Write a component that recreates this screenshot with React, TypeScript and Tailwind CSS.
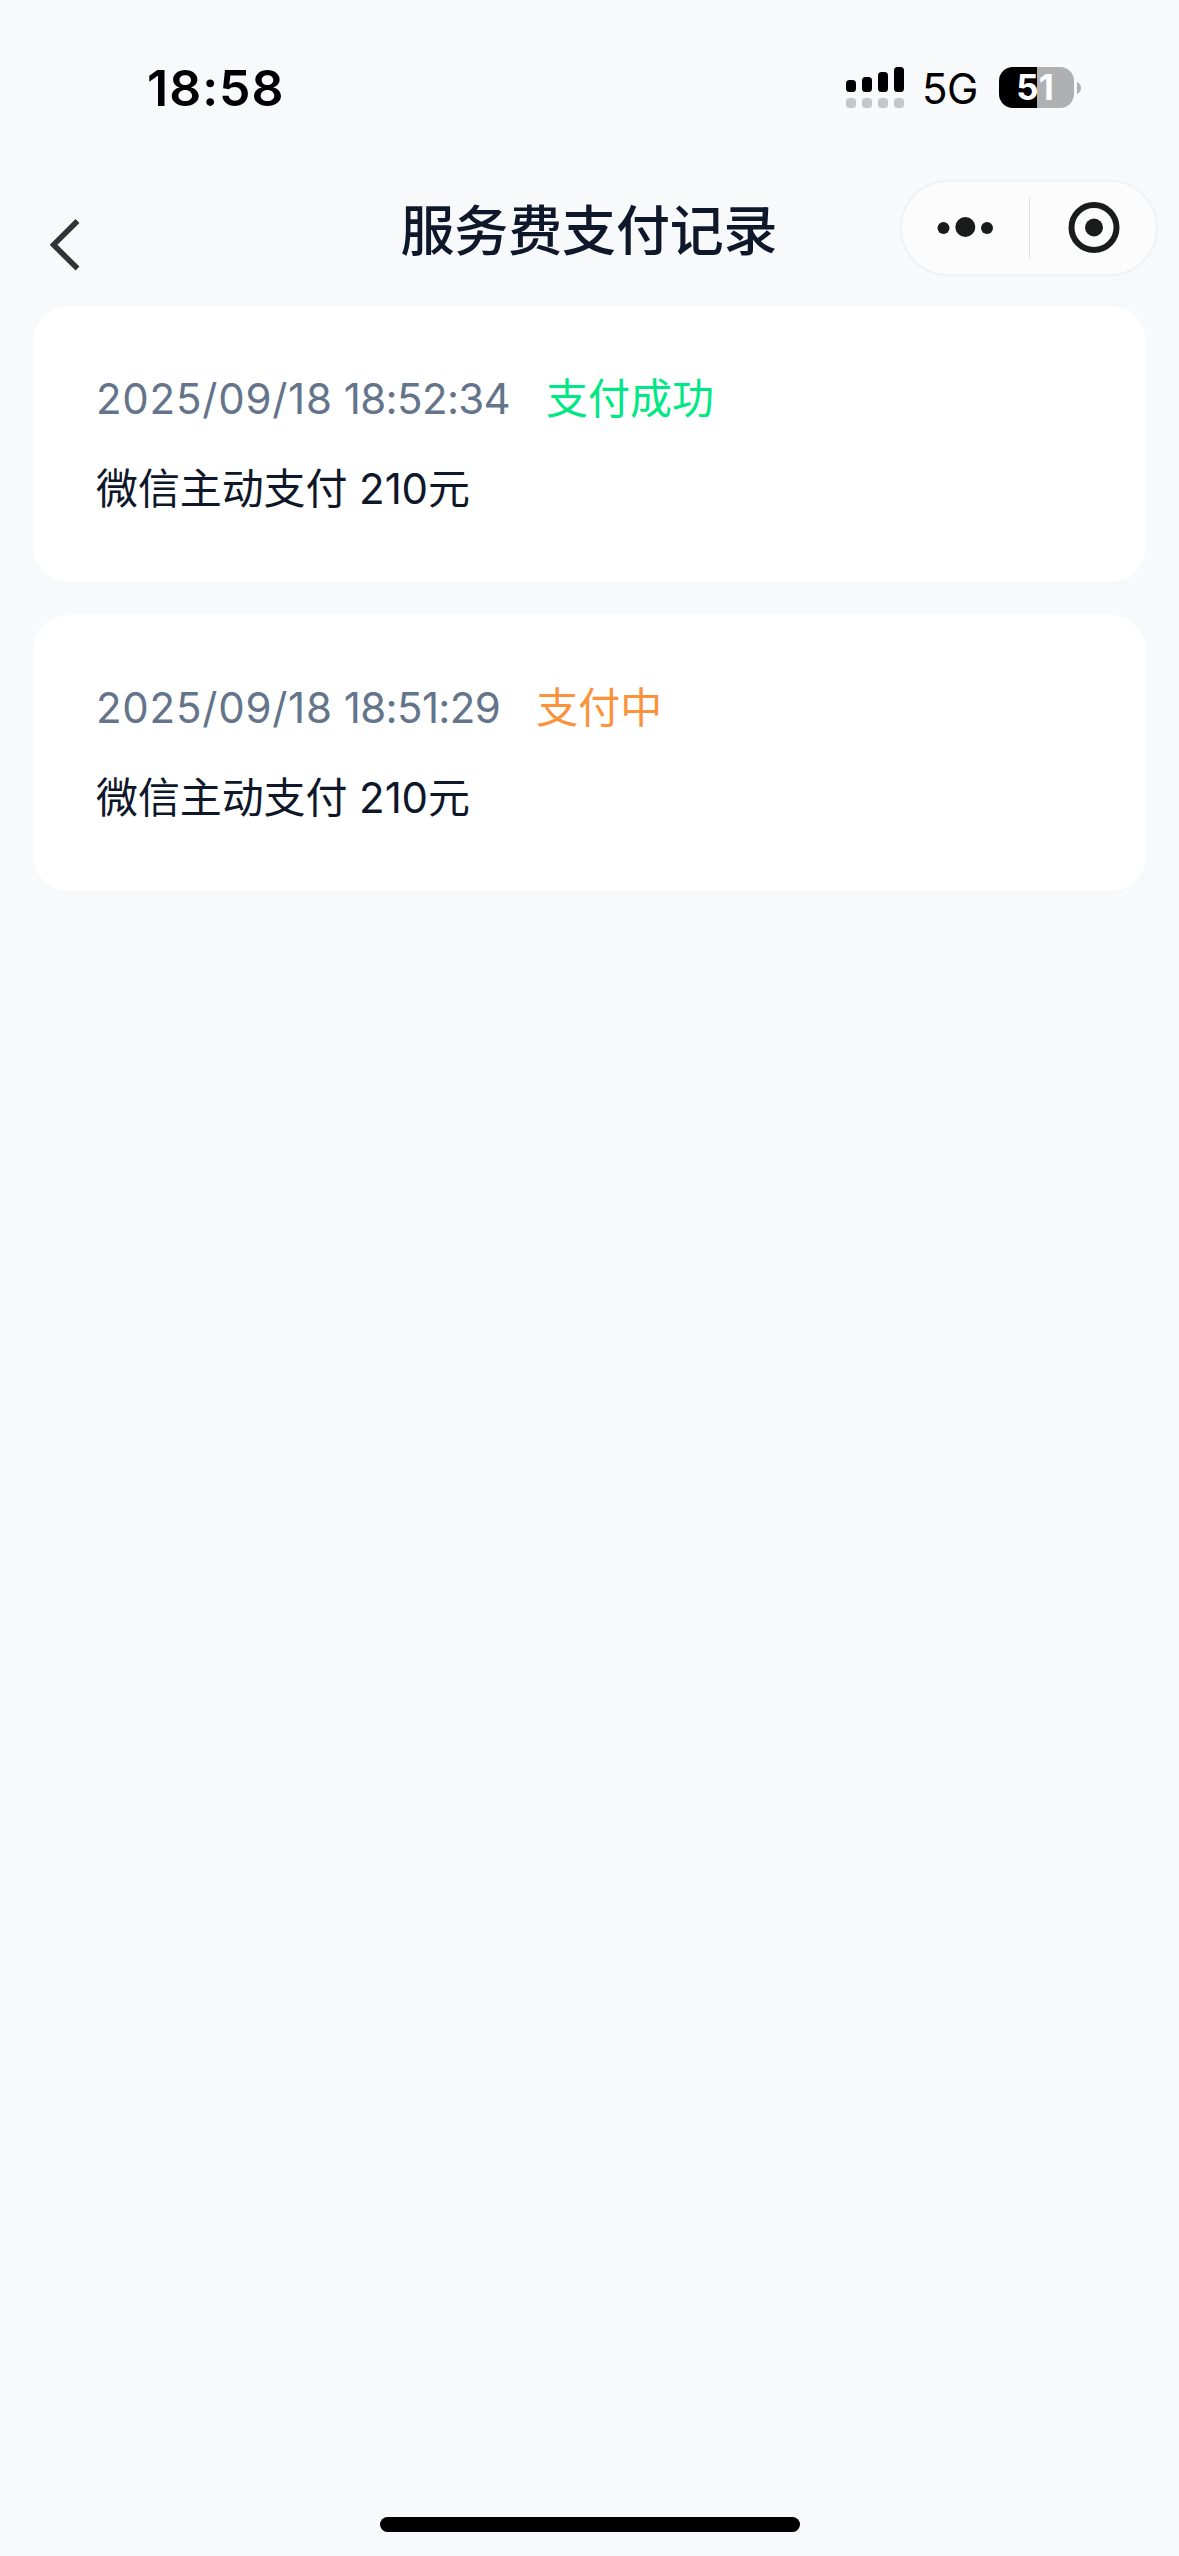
import React from 'react';

interface PayRecord {
  id: number;
  date: string;
  time: string;
  status: 'success' | 'pending';
  desc: string;
}

const records: PayRecord[] = [
  { id: 1, date: '2025/09/18', time: '18:52:34', status: 'success', desc: '微信主动支付 210元' },
  { id: 2, date: '2025/09/18', time: '18:51:29', status: 'pending', desc: '微信主动支付 210元' },
];

const statusMap = {
  success: { label: '支付成功', color: 'text-[#00e884]' },
  pending: { label: '支付中', color: 'text-[#fb923c]' },
};

function StatusBar() {
  return (
    <div className="h-[176px] pl-[147px] pr-[98px] pb-px flex items-center justify-between text-black">
      <span className="pt-px text-[50px] leading-none font-semibold tracking-[1px]">18:58</span>
      <div className="flex items-center">
        <svg className="w-[58px] h-[41px]" viewBox="0 0 58 41">
          <rect x="0" y="13" width="10" height="12" rx="3.5" />
          <rect x="16" y="10" width="10" height="15" rx="3.5" />
          <rect x="32" y="5" width="10" height="20" rx="3.5" />
          <rect x="48" y="0" width="10" height="25" rx="3.5" />
          <g fill="#c6c7c9">
            <rect x="0" y="31" width="10" height="10" rx="3.5" />
            <rect x="16" y="31" width="10" height="10" rx="3.5" />
            <rect x="32" y="31" width="10" height="10" rx="3.5" />
            <rect x="48" y="31" width="10" height="10" rx="3.5" />
          </g>
        </svg>
        <span className="ml-[18px] w-[57px] pt-[3px] text-[42px] leading-none tracking-[-0.5px]">5G</span>
        <div className="ml-5 w-[75px] h-[41px] rounded-[14px] bg-[linear-gradient(90deg,#000_38px,#afb0b2_38px)] flex items-center justify-center">
          <span className="pr-[3px] text-[35px] leading-none font-bold text-white">51</span>
        </div>
        <svg className="ml-[3px] w-1 h-3" viewBox="0 0 4 12">
          <path d="M0 0C2.5 1 4 3.300 4 6S2.500 11 0 12Z" fill="#afb0b2" />
        </svg>
      </div>
    </div>
  );
}

function NavBar() {
  return (
    <div className="h-[130px] pl-[50px] pr-[21px] grid grid-cols-[1fr_auto_1fr] items-start text-[#0f172a]">
      <svg className="mt-[42px] w-[30px] h-[54px]" viewBox="0 0 30 54" fill="none" stroke="#333" strokeWidth="5.5">
        <path d="M27.500 3L3.500 26.800L27.500 50.500" />
      </svg>
      <h1 className="mt-[29px] ml-[-30px] text-[54px] leading-none tracking-[-0.15px] font-medium">服务费支付记录</h1>
      <div className="mt-1 justify-self-end w-[258px] h-24 rounded-full border-2 border-[#f0f1f2] bg-[#fcfcfd] flex items-center">
        <svg className="w-[127px] h-[60px]" viewBox="0 0 127 60" fill="#1a1b1b">
          <circle cx="41.500" cy="30" r="6" />
          <circle cx="63.300" cy="29" r="10" />
          <circle cx="85" cy="30" r="6" />
        </svg>
        <div className="w-px h-[60px] bg-[#dcdddd]" />
        <svg className="w-[126px] h-[60px]" viewBox="0 0 126 60">
          <circle cx="64" cy="29.500" r="22.500" fill="none" stroke="#1a1b1b" strokeWidth="6" />
          <circle cx="64" cy="29.500" r="9" fill="#1a1b1b" />
        </svg>
      </div>
    </div>
  );
}

function RecordCard({ record }: { record: PayRecord }) {
  const status = statusMap[record.status];
  return (
    <div className="h-[276px] rounded-[36px] bg-white pl-[63px] pr-16 pt-[48px] text-[42px]">
      <div className="h-[90px] flex items-center gap-9 leading-none">
        <div className="text-[#64748b] tracking-[-0.65px]">
          <span className="tracking-[0.75px]">{record.date}</span> <span>{record.time}</span>
        </div>
        <span className={status.color}>{status.label}</span>
      </div>
      <div className="h-[90px] flex items-center leading-none tracking-[-0.1px] text-[#0f172a]">{record.desc}</div>
    </div>
  );
}

export default function App() {
  return (
    <div className="w-full h-[2556px] flex flex-col bg-[#f8f9fb] font-[Inter,'Noto_Sans_CJK_SC',sans-serif]">
      <StatusBar />
      <NavBar />
      <main className="flex-1 px-[33px] flex flex-col gap-[33px]">
        {records.map((r) => (
          <RecordCard key={r.id} record={r} />
        ))}
      </main>
      <div className="mb-6 mx-auto w-[420px] h-[15px] rounded-full bg-black" />
    </div>
  );
}
